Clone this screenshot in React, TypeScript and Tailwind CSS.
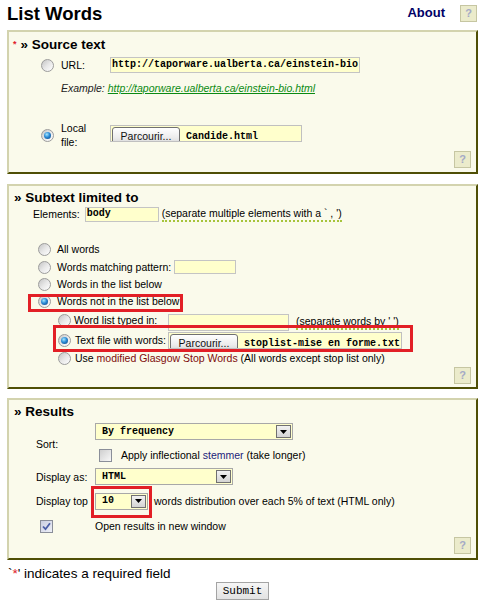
import React from "react";

const mono = "font-['Liberation_Mono','Courier_New',monospace]";

function Radio({ checked = false }: { checked?: boolean }) {
  return (
    <span className="flex h-[13px] w-[13px] shrink-0 items-center justify-center rounded-full border border-[#9c9c9c] bg-[linear-gradient(135deg,#c4c4c4_0%,#e8e8e8_50%,#ffffff_100%)]">
      {checked && (
        <span className="h-[7px] w-[7px] rounded-full bg-[radial-gradient(circle_at_40%_35%,#a6e8ff_0%,#2a8ad6_45%,#0a3d78_100%)]" />
      )}
    </span>
  );
}

function Checkbox({ checked = false }: { checked?: boolean }) {
  return checked ? (
    <span className="flex h-[13px] w-[13px] shrink-0 items-center justify-center border border-[#8a8e99] bg-[linear-gradient(135deg,#c9cde0,#eef0f8)]">
      <svg width="9" height="9" viewBox="0 0 9 9">
        <path d="M1 4.5 L3.5 7.2 L8 1.2" stroke="#4a5da6" strokeWidth="1.8" fill="none" />
      </svg>
    </span>
  ) : (
    <span className="flex h-[13px] w-[13px] shrink-0 border border-[#8a8e99] bg-[linear-gradient(135deg,#cfcfcf,#f8f8f8)]" />
  );
}

function Help() {
  return (
    <span className="flex h-[17px] w-[17px] items-center justify-center border border-[#c6c6a2] bg-[#ebebcb] text-[11px] font-bold leading-none text-[#a4a9c6]">
      ?
    </span>
  );
}

function Select({ w, children }: { w: string; children: React.ReactNode }) {
  return (
    <div className={`flex h-[17px] items-center border border-[#a8a8a8] bg-[#ffffcc] ${w}`}>
      <span className={`pl-[6px] text-[10px] font-bold leading-[12px] ${mono}`}>{children}</span>
      <span className="ml-auto mr-[1px] flex h-[13px] w-[15px] items-center justify-center border border-[#707070] bg-[linear-gradient(#f2f2f2,#d4d4d4)]">
        <svg width="7" height="4" viewBox="0 0 7 4">
          <path d="M0 0h7L3.5 4z" fill="#000" />
        </svg>
      </span>
    </div>
  );
}

function FileInput({ w, name }: { w: string; name: string }) {
  return (
    <div className={`flex h-[17px] shrink-0 items-start overflow-hidden border border-[#c0c0c0] bg-[#ffffcc] ${w}`}>
      <span className="ml-[1px] mt-[1px] flex h-[18px] w-[68px] shrink-0 items-start justify-center rounded-[3px] border border-[#707070] bg-[linear-gradient(#ffffff,#ececec_60%,#d6d6d6)] pt-[2px] text-[10.5px] leading-[12px] text-[#111]">
        Parcourir...
      </span>
      <span className={`ml-[6px] mt-[5px] text-[10px] font-bold leading-[12px] ${mono}`}>{name}</span>
    </div>
  );
}

function Panel({ className, children }: { className: string; children: React.ReactNode }) {
  return (
    <div
      className={`flex flex-col border-2 border-t-[#d3d3ae] border-l-[#d3d3ae] border-r-[#4f4f05] border-b-[#4f4f05] bg-[#fafaeb] ${className}`}
    >
      {children}
    </div>
  );
}

export default function App() {
  return (
    <div className="h-[606px] w-[488px] bg-white pl-[7px] pr-[10px] font-['Liberation_Sans',Arial,sans-serif] text-[10.5px] leading-[14px] text-black">
      {/* Title row */}
      <div className="flex h-[30px] items-start">
        <h1 className="mt-[2px] text-[18.5px] font-bold leading-[24px]">List Words</h1>
        <span className="ml-auto mt-[5px] text-[13px] font-bold leading-[16px] text-[#000066]">About</span>
        <span className="ml-[15px] mr-[1px] mt-[5px]">
          <Help />
        </span>
      </div>

      {/* Source text */}
      <Panel className="h-[144px]">
        <div className="mt-[5px] flex h-[16px] items-center pl-[4px] text-[13.5px] font-bold leading-[16px]">
          <span className="mr-[4px] -mt-[2px] text-[9px] text-[#e0202a]">*</span>
          <span>» Source text</span>
        </div>
        <div className="mt-[4px] flex h-[16px] items-center pl-[32px]">
          <Radio />
          <span className="ml-[7px] w-[49px]">URL:</span>
          <div className="flex h-[16px] w-[250px] items-center border border-[#c4c4c4] bg-[#ffffcc] pl-[1px]">
            <span className={`text-[10px] font-bold leading-[12px] ${mono}`}>http://taporware.ualberta.ca/einstein-bio</span>
          </div>
        </div>
        <div className="mt-[8px] flex h-[14px] items-center pl-[52px] italic">
          <span className="text-[#222]">Example:</span>
          <span className="ml-[3px] text-[#0a8a12] underline">http://taporware.ualberta.ca/einstein-bio.html</span>
        </div>
        <div className="mt-[26px] flex h-[28px] items-center pl-[32px]">
          <Radio checked />
          <div className="ml-[7px] flex w-[49px] flex-col leading-[14px]">
            <span>Local</span>
            <span>file:</span>
          </div>
          <div className="self-start pt-[4px]">
            <FileInput w="w-[192px]" name="Candide.html" />
          </div>
        </div>
        <div className="mt-[2px] flex justify-end pr-[5px]">
          <Help />
        </div>
      </Panel>

      {/* Subtext limited to */}
      <Panel className="mt-[10px] h-[205px]">
        <div className="mt-[4px] flex h-[16px] items-center pl-[5px] text-[13.5px] font-bold leading-[16px]">
          » Subtext limited to
        </div>
        <div className="mt-[1px] flex h-[14px] items-center pl-[24px]">
          <span>Elements:</span>
          <div className="ml-[5px] flex h-[15px] w-[74px] items-center border border-[#c4c4c4] bg-[#ffffcc] pl-[1px]">
            <span className={`text-[10px] font-bold leading-[12px] ${mono}`}>body</span>
          </div>
          <span className="ml-[3px] border-b-2 border-dotted border-[#a6c43c] leading-[13px]">
            (separate multiple elements with a ` , ')
          </span>
        </div>
        <div className="mt-[19px] flex h-[18px] items-center gap-[6px] pl-[29px]">
          <Radio />
          <span>All words</span>
        </div>
        <div className="flex h-[18px] items-center gap-[6px] pl-[29px]">
          <Radio />
          <span>Words matching pattern:</span>
          <div className="-ml-[3px] h-[14px] w-[62px] border border-[#c4c4c4] bg-[#ffffcc]" />
        </div>
        <div className="flex h-[16px] items-center gap-[6px] pl-[29px]">
          <Radio />
          <span>Words in the list below</span>
        </div>
        <div className="relative flex h-[18px] items-center gap-[6px] pl-[29px]">
          <Radio checked />
          <span>Words not in the list below</span>
          <span className="absolute left-[19px] top-[2px] h-[18px] w-[155px] border-[3px] border-[#e21f26]" />
        </div>
        <div className="flex h-[21px] items-start pl-[49px]">
          <span className="mt-[4px]">
            <Radio />
          </span>
          <span className="ml-[3px] mt-[3px] w-[94px]">Word list typed in:</span>
          <div className="mt-[4px] h-[17px] w-[121px] border border-[#c4c4c4] bg-[#ffffcc]" />
          <span className="ml-[7px] mt-[5px] border-b-2 border-dotted border-[#a6c43c] leading-[13px]">
            (separate words by ' ')
          </span>
        </div>
        <div className="relative flex h-[18px] items-center pl-[49px]">
          <Radio checked />
          <span className="ml-[4px] w-[93px]">Text file with words:</span>
          <FileInput w="w-[234px]" name="stoplist-mise en forme.txt" />
          <span className="absolute -top-[6px] left-[44px] h-[27px] w-[360px] border-[3px] border-[#e21f26]" />
        </div>
        <div className="flex h-[18px] items-center pl-[49px]">
          <Radio />
          <span className="ml-[4px]">
            Use <span className="text-[#7d0a0a]">modified Glasgow Stop Words</span> (All words except stop list only)
          </span>
        </div>
        <div className="flex justify-end pr-[5px]">
          <Help />
        </div>
      </Panel>

      {/* Results */}
      <Panel className="mt-[9px] h-[162px]">
        <div className="mt-[4px] flex h-[16px] items-center pl-[5px] text-[13.5px] font-bold leading-[16px]">
          » Results
        </div>
        <div className="mt-[3px] flex">
          <div className="flex w-[86px] shrink-0 items-center pl-[27px]">Sort:</div>
          <div className="flex flex-col">
            <Select w="w-[198px]">By frequency</Select>
            <div className="mt-[6px] flex h-[18px] items-center pl-[4px]">
              <Checkbox />
              <span className="ml-[9px]">
                Apply inflectional <span className="text-[#1c1c7a]">stemmer</span> (take longer)
              </span>
            </div>
          </div>
        </div>
        <div className="mt-[4px] flex h-[17px] items-center">
          <div className="w-[86px] shrink-0 pl-[27px]">Display as:</div>
          <Select w="w-[138px]">HTML</Select>
        </div>
        <div className="mt-[7px] flex h-[18px] items-center">
          <div className="w-[86px] shrink-0 pl-[27px]">Display top</div>
          <div className="relative">
            <Select w="w-[53px]">10</Select>
            <span className="absolute -left-[4px] -top-[7px] h-[32px] w-[61px] border-[3px] border-[#e21f26]" />
          </div>
          <span className="ml-[6px]">words distribution over each 5% of text (HTML only)</span>
        </div>
        <div className="mt-[7px] flex h-[18px] items-center">
          <div className="w-[86px] shrink-0 pl-[31px]">
            <Checkbox checked />
          </div>
          <span>Open results in new window</span>
        </div>
        <div className="mt-[2px] flex justify-end pr-[5px]">
          <Help />
        </div>
      </Panel>

      <div className="mt-[6px] flex h-[16px] items-center pl-[1px] text-[13.5px] leading-[16px]">
        <span>`</span>
        <span className="text-[#e0202a]">*</span>
        <span>' indicates a required field</span>
      </div>
      <div className="flex justify-center">
        <button
          className={`h-[18px] w-[53px] border border-[#a4a4a4] bg-[linear-gradient(#f6f6f6,#e2e2e2)] text-[11px] leading-[14px] ${mono}`}
        >
          Submit
        </button>
      </div>
    </div>
  );
}
